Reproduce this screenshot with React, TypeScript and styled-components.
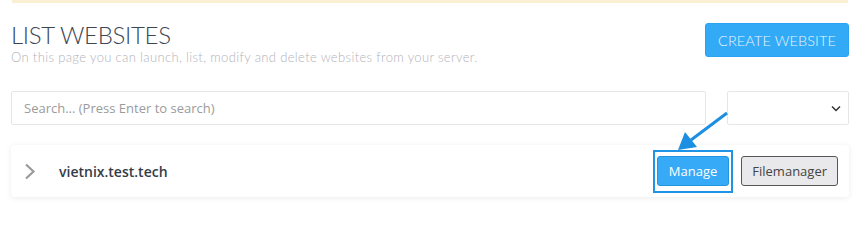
import styled, { createGlobalStyle } from "styled-components";

const GlobalStyle = createGlobalStyle`
  body {
    margin: 0;
    background: #fff;
    font-family: "Open Sans", "Liberation Sans", sans-serif;
  }
`;

const Page = styled.div`
  position: relative;
  width: 860px;
  height: 215px;
  overflow: hidden;
`;

const Notice = styled.div`
  margin: 0 12px;
  height: 3px;
  background: #fbefd3;
`;

const Content = styled.div`
  padding: 0 11px;
`;

const Header = styled.div`
  display: flex;
  justify-content: space-between;
  align-items: flex-start;
  margin-top: 20px;
`;

const TitleBlock = styled.div`
  margin-top: -2px;
`;

const Title = styled.h1`
  margin: 0;
  font-family: Lato, "Liberation Sans", sans-serif;
  font-weight: 300;
  font-size: 24px;
  line-height: 28px;
  letter-spacing: -0.3px;
  color: #3d4752;
`;

const Subtitle = styled.p`
  margin: 0;
  font-family: Lato, "Liberation Sans", sans-serif;
  font-weight: 300;
  font-size: 13px;
  line-height: 16px;
  letter-spacing: 0.35px;
  color: #b3b3bb;
`;

const PrimaryButton = styled.button`
  height: 34px;
  padding: 0 12px;
  border: 1px solid #2aa3f0;
  border-radius: 3px;
  background: #33aaf6;
  color: #e8f5ff;
  font-family: Lato, "Liberation Sans", sans-serif;
  font-weight: 300;
  font-size: 14.5px;
  letter-spacing: 0.1px;
`;

const SearchRow = styled.div`
  display: flex;
  gap: 21px;
  margin-top: 26px;
`;

const SearchInput = styled.input`
  box-sizing: border-box;
  flex: 1;
  height: 34px;
  padding: 0 12px;
  border: 1px solid #e6e6e6;
  border-radius: 2px;
  font-family: "Open Sans", "Liberation Sans", sans-serif;
  font-size: 13px;
  outline: none;
  &::placeholder {
    color: #9b9b9b;
  }
`;

const SelectBox = styled.div`
  position: relative;
  box-sizing: border-box;
  width: 122px;
  height: 34px;
  border: 1px solid #e6e6e6;
  border-radius: 2px;
  background: #fff;
`;

const SelectCaret = styled.svg`
  position: absolute;
  right: 7px;
  top: 13px;
`;

const Card = styled.div`
  display: flex;
  align-items: center;
  height: 52px;
  margin-top: 20px;
  padding: 0 11px 0 13px;
  background: #fff;
  border-radius: 4px;
  box-shadow: 0 1px 6px rgba(0, 0, 0, 0.08);
`;

const Expand = styled.svg`
  flex: none;
`;

const SiteName = styled.span`
  flex: 1;
  margin-left: 23px;
  font-size: 14px;
  font-weight: 600;
  color: #343c47;
`;

const Highlight = styled.span`
  display: inline-flex;
  padding: 4px 2px 5px;
  border: 2px solid #1f93e6;
`;

const ActionButton = styled.button<{ $variant: "primary" | "default" }>`
  height: 30px;
  padding: 0 ${(p) => (p.$variant === "primary" ? "11px" : "10px")};
  border-radius: 3px;
  font-family: "Open Sans", "Liberation Sans", sans-serif;
  font-size: 13px;
  border: 1px solid ${(p) => (p.$variant === "primary" ? "#2196e0" : "#555")};
  background: ${(p) => (p.$variant === "primary" ? "#36aaf7" : "#e9e9eb")};
  color: ${(p) => (p.$variant === "primary" ? "#fff" : "#444")};
`;

const Actions = styled.div`
  display: flex;
  align-items: center;
  gap: 8px;
`;

const Pointer = styled.svg`
  position: absolute;
  left: 0;
  top: 0;
  pointer-events: none;
`;

export default function App() {
  return (
    <Page>
      <GlobalStyle />
      <Notice />
      <Content>
        <Header>
          <TitleBlock>
            <Title>LIST WEBSITES</Title>
            <Subtitle>
              On this page you can launch, list, modify and delete websites from your server.
            </Subtitle>
          </TitleBlock>
          <PrimaryButton>CREATE WEBSITE</PrimaryButton>
        </Header>

        <SearchRow>
          <SearchInput placeholder="Search... (Press Enter to search)" />
          <SelectBox>
            <SelectCaret width="10" height="7" viewBox="0 0 10 7">
              <path d="M1 1.5 L5 5.5 L9 1.5" fill="none" stroke="#333" strokeWidth="1.5" />
            </SelectCaret>
          </SelectBox>
        </SearchRow>

        <Card>
          <Expand width="12" height="17" viewBox="0 0 12 17">
            <path d="M2 1.5 L9.5 8.5 L2 15.5" fill="none" stroke="#9a9a9a" strokeWidth="2.2" />
          </Expand>
          <SiteName>vietnix.test.tech</SiteName>
          <Actions>
            <Highlight>
              <ActionButton $variant="primary">Manage</ActionButton>
            </Highlight>
            <ActionButton $variant="default">Filemanager</ActionButton>
          </Actions>
        </Card>
      </Content>

      <Pointer width="860" height="215" viewBox="0 0 860 215">
        <line x1="727" y1="113" x2="691" y2="140" stroke="#1c8fe2" strokeWidth="3" />
        <polygon points="678,150 685,132 697,147" fill="#1c8fe2" />
      </Pointer>
    </Page>
  );
}
